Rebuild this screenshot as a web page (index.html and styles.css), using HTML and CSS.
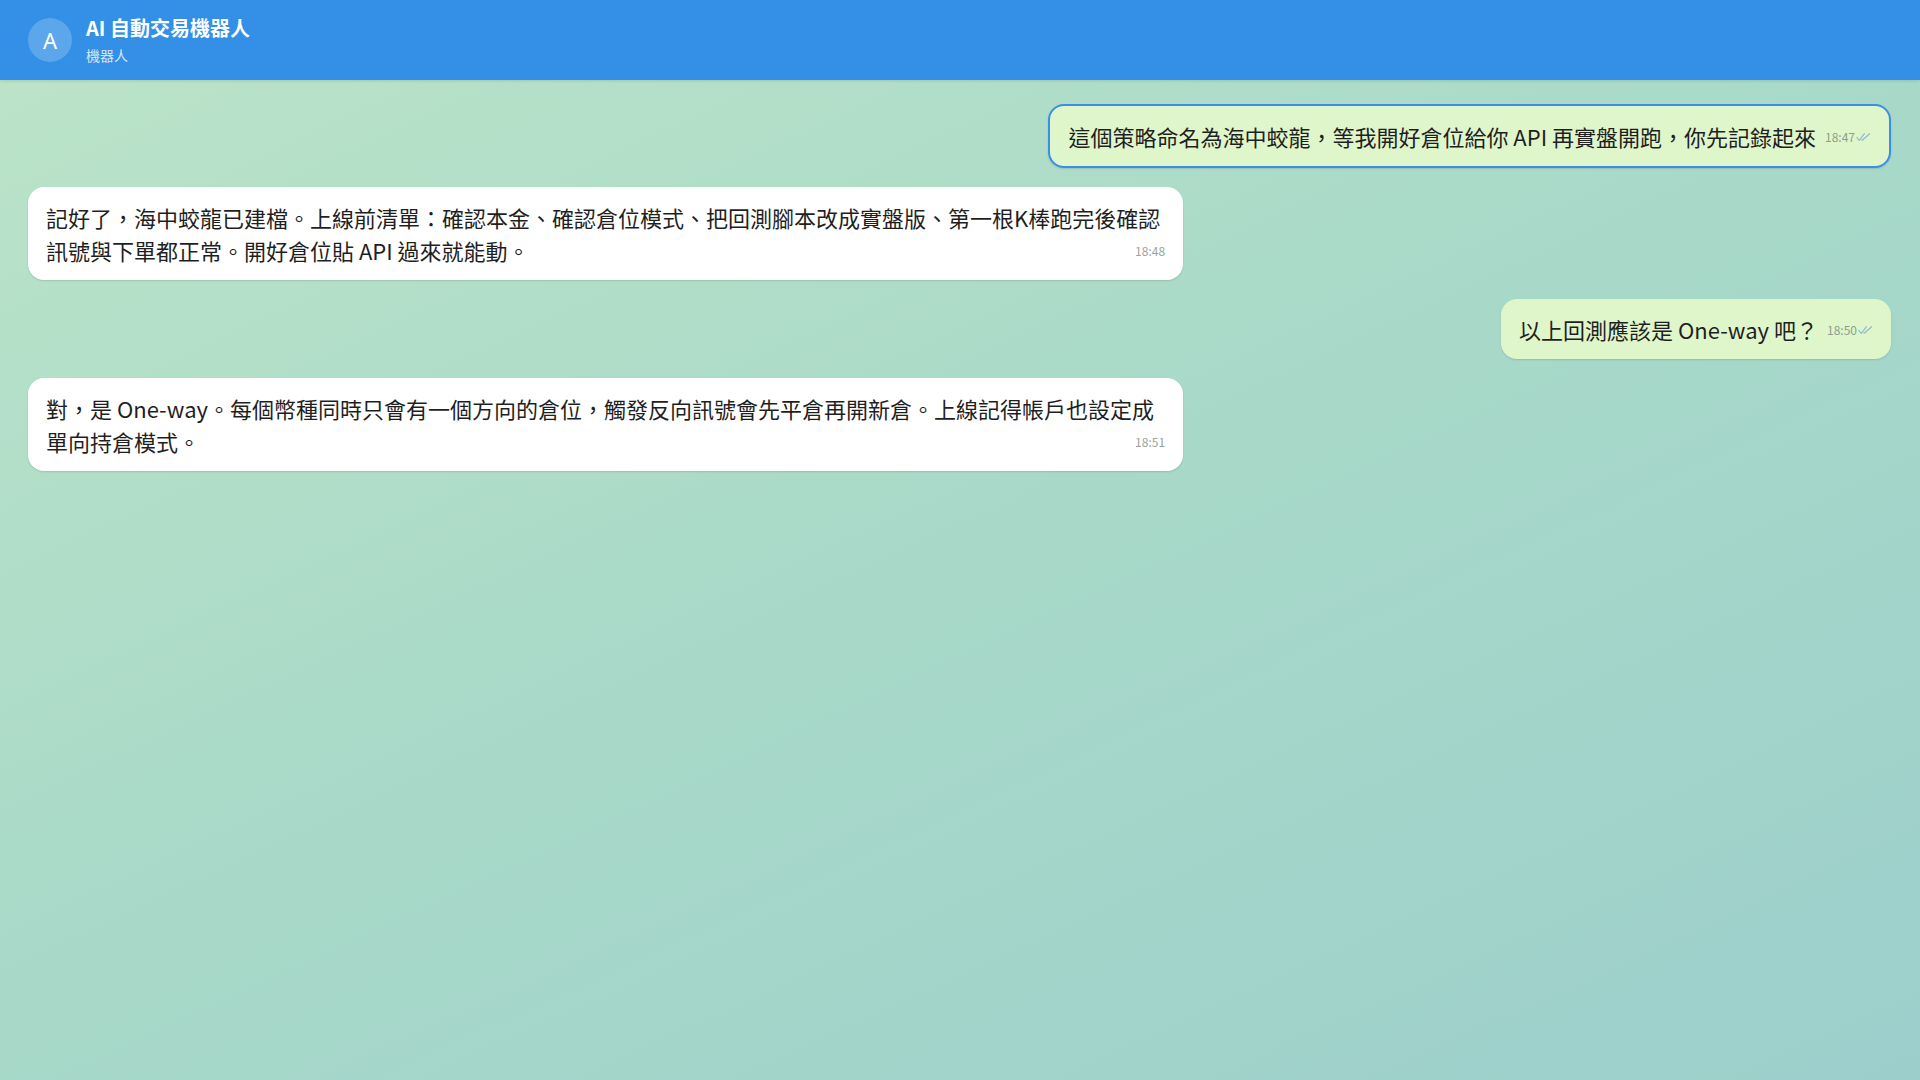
FILE: index.html
```html
<!DOCTYPE html>
<html>
<head>
<meta http-equiv="Content-Type" content="text/html; charset=utf-8"/>
<title>AI 自動交易機器人</title>
<link rel="stylesheet" href="styles.css">
</head>
<body>
<div class="app">
  <header class="topbar">
    <div class="avatar">A</div>
    <div class="peer">
      <div class="peer-name">AI 自動交易機器人</div>
      <div class="peer-status">機器人</div>
    </div>
  </header>

  <main class="chat">
    <div class="row out">
      <div class="bubble selected">這個策略命名為海中蛟龍，等我開好倉位給你 API 再實盤開跑，你先記錄起來<span class="meta">18:47<svg class="ticks" viewBox="0 0 16 10" width="15" height="10"><path d="M1 5.5l2.5 3L9 1.5M6.2 8l0.5 0.5L14.5 1.5" fill="none" stroke="currentColor" stroke-width="1.2" stroke-linecap="round" stroke-linejoin="round"/></svg></span></div>
    </div>

    <div class="row in">
      <div class="bubble">記好了，海中蛟龍已建檔。上線前清單：確認本金、確認倉位模式、把回測腳本改成實盤版、第一根K棒跑完後確認訊號與下單都正常。開好倉位貼 API 過來就能動。<span class="meta">18:48</span></div>
    </div>

    <div class="row out">
      <div class="bubble">以上回測應該是 One-way 吧？<span class="meta">18:50<svg class="ticks" viewBox="0 0 16 10" width="15" height="10"><path d="M1 5.5l2.5 3L9 1.5M6.2 8l0.5 0.5L14.5 1.5" fill="none" stroke="currentColor" stroke-width="1.2" stroke-linecap="round" stroke-linejoin="round"/></svg></span></div>
    </div>

    <div class="row in">
      <div class="bubble">對，是 One-way。每個幣種同時只會有一個方向的倉位，觸發反向訊號會先平倉再開新倉。上線記得帳戶也設定成單向持倉模式。<span class="meta">18:51</span></div>
    </div>
  </main>
</div>
</body>
</html>
```

FILE: styles.css
```css
html, body {
  margin: 0;
  height: 100%;
}

body {
  font-family: "Noto Sans CJK TC", "Noto Sans", sans-serif;
  color: #1f1f1f;
}

.app {
  display: flex;
  flex-direction: column;
  height: 100vh;
  background: linear-gradient(155deg, #bce4c8 0%, #a8d9c8 50%, #9ccfcc 100%);
}

/* header */
.topbar {
  height: 80px;
  box-sizing: border-box;
  display: flex;
  align-items: center;
  gap: 14px;
  padding: 0 28px;
  background-color: #3490e6;
  box-shadow: 0 1px 3px rgba(0, 0, 0, 0.12);
  color: white;
}

.avatar {
  width: 44px;
  height: 44px;
  border-radius: 50%;
  background-color: rgba(255, 255, 255, 0.2);
  display: flex;
  align-items: center;
  justify-content: center;
  font-size: 22px;
  font-family: "Noto Sans", sans-serif;
}

.peer {
  display: flex;
  flex-direction: column;
  margin-top: -1px;
}

.peer-name {
  font-size: 20px;
  font-weight: bold;
  line-height: 26px;
}

.peer-status {
  font-size: 14px;
  line-height: 20px;
  margin-top: 4px;
  color: rgba(255, 255, 255, 0.8);
}

/* messages */
.chat {
  flex: 1;
  display: flex;
  flex-direction: column;
  gap: 19px;
  padding: 24px 29px 24px 28px;
}

.row {
  display: flex;
}

.row.out {
  justify-content: flex-end;
}

.bubble {
  max-width: 62%;
  box-sizing: border-box;
  padding: 14px 18px 13px;
  border-radius: 16px;
  font-size: 22px;
  line-height: 33px;
  background-color: white;
  box-shadow: 0 1px 2px rgba(0, 0, 0, 0.13);
}

.out .bubble {
  background-color: #dff6cb;
}

.bubble.selected {
  border: 2px solid #3a8ee8;
  padding: 14px 18px 13px;
}

.meta {
  float: right;
  margin-left: 9px;
  margin-top: 7px;
  font-size: 12px;
  color: #9aa39c;
  display: flex;
  align-items: center;
  line-height: 20px;
}

.out .meta {
  color: #8e9d8c;
}

.ticks {
  color: #93b6d4;
  margin-left: 1px;
}
```
